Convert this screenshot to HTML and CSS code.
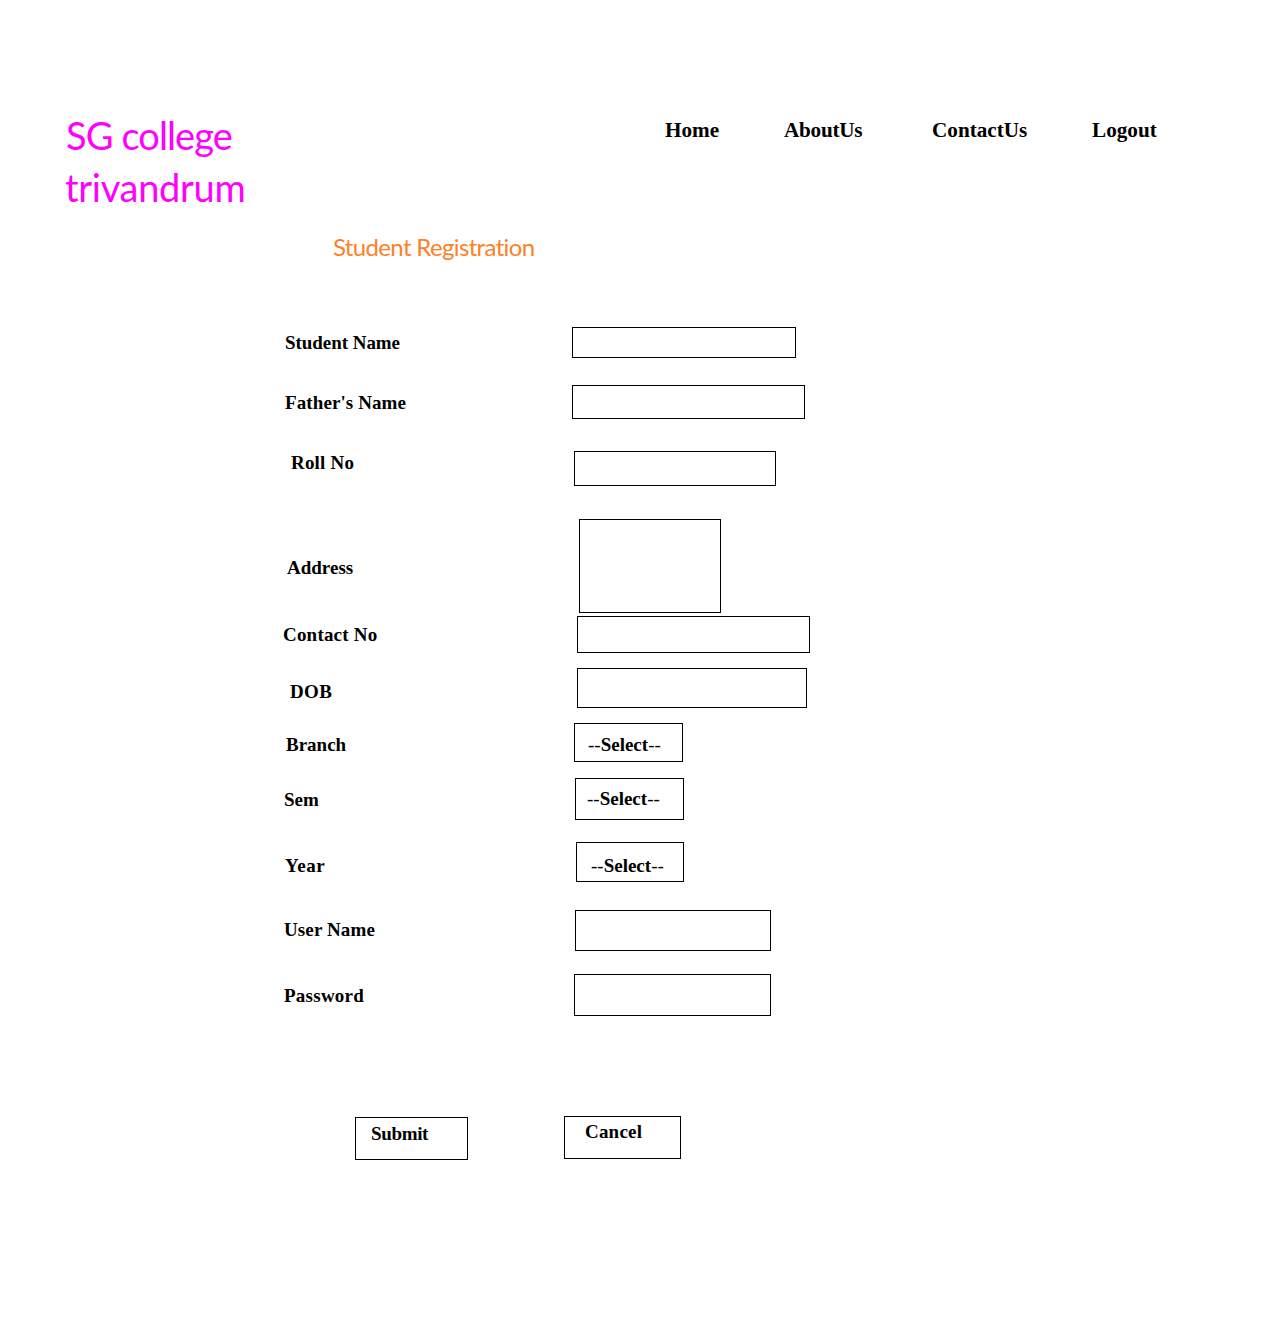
FILE: index.html
```html
<!DOCTYPE html>
<html lang="en">
<head>
<meta charset="utf-8">
<title>Student Registration</title>
<link rel="stylesheet" href="styles.css">
</head>
<body>
<header class="header">
  <div class="brand"><span class="brand-top">SG college</span><span class="brand-bottom">trivandrum</span></div>
  <nav class="nav"><a>Home</a><a class="about">AboutUs</a><a>ContactUs</a><a>Logout</a></nav>
</header>
<main class="main">
  <h1 class="title">Student Registration</h1>
  <form class="form">
    <div class="row student"><label>Student Name</label><input type="text"></div>
    <div class="row father"><label>Father's Name</label><input type="text"></div>
    <div class="row roll"><label>Roll No</label><input type="text"></div>
    <div class="row address"><label>Address</label><textarea></textarea></div>
    <div class="row contact"><label>Contact No</label><input type="text"></div>
    <div class="row dob"><label>DOB</label><input type="text"></div>
    <div class="row branch"><label>Branch</label><div class="select"><i>--</i>Select<i>--</i></div></div>
    <div class="row sem"><label>Sem</label><div class="select"><i>--</i>Select<i>--</i></div></div>
    <div class="row year"><label>Year</label><div class="select"><i>--</i>Select<i>--</i></div></div>
    <div class="row user"><label>User Name</label><input type="text"></div>
    <div class="row password"><label>Password</label><input type="password"></div>
    <div class="actions"><button type="button" class="submit">Submit</button><button type="button" class="cancel">Cancel</button></div>
  </form>
</main>
</body>
</html>
```
FILE: styles.css
```css
* { box-sizing: border-box; }
body {
  margin: 0;
  min-height: 1319px;
  background: #fff;
  color: #000;
  font: bold 19px/21px "Liberation Serif", "Times New Roman", serif;
}
.header { display: flex; height: 233px; padding: 109px 0 0 65px; }
.brand {
  display: flex;
  flex-direction: column;
  width: 600px;
  color: #f0f;
  font: 400 38px/52px Lato, sans-serif;
}
.brand-top { padding-left: 1px; letter-spacing: -0.9px; }
.brand-bottom { letter-spacing: -0.3px; }
.nav {
  display: grid;
  grid-template-columns: 119px 148px 160px auto;
  align-content: start;
  padding-top: 9px;
  font-size: 21.2px;
  line-height: 24px;
}
.nav .about { letter-spacing: -0.25px; }
.main { padding-left: 280px; }
.title {
  height: 94px;
  margin: 0;
  padding-left: 53px;
  color: #ff7f27;
  font: 400 24px/28px Lato, sans-serif;
  font-variant-ligatures: none;
  letter-spacing: -0.65px;
}
.form { display: flex; flex-direction: column; }
.row { display: flex; align-items: flex-start; }
.row label { width: 292px; }
.row input, .row textarea, .select, .actions button {
  border: 1px solid #000;
  border-radius: 0;
  background: #fff;
  color: #000;
  font: inherit;
  margin: 0;
  padding: 0;
  resize: none;
  outline: none;
}
.select i { font-style: normal; font-weight: 400; }

.student label { padding: 5px 0 0 5px; letter-spacing: -0.05px; }
.student input { width: 224px; height: 31px; }
.father { margin-top: 27px; }
.father label { padding: 7px 0 0 5px; letter-spacing: 0.1px; }
.father input { width: 233px; height: 34px; }
.roll { margin-top: 32px; }
.roll label { padding: 1px 0 0 11px; letter-spacing: 0.2px; }
.roll input { width: 202px; height: 35px; margin-left: 2px; }
.address { margin-top: 33px; }
.address label { padding: 38px 0 0 7px; }
.address textarea { width: 142px; height: 94px; margin-left: 7px; }
.contact { margin-top: 3px; }
.contact label { padding: 8px 0 0 3px; letter-spacing: 0.2px; }
.contact input { width: 233px; height: 37px; margin-left: 5px; }
.dob { margin-top: 15px; }
.dob label { padding: 13px 0 0 10px; letter-spacing: 0.4px; }
.dob input { width: 230px; height: 40px; margin-left: 5px; }
.branch { margin-top: 15px; }
.branch label { padding: 11px 0 0 6px; }
.branch .select { width: 109px; height: 39px; margin-left: 2px; padding: 10px 0 0 13px; }
.sem { margin-top: 16px; }
.sem label { padding: 11px 0 0 4px; }
.sem .select { width: 109px; height: 42px; margin-left: 3px; padding: 9px 0 0 11px; }
.year { margin-top: 22px; }
.year label { padding: 13px 0 0 5px; letter-spacing: 0.6px; }
.year .select { width: 108px; height: 40px; margin-left: 4px; padding: 12px 0 0 14px; }
.user { margin-top: 28px; }
.user label { padding: 9px 0 0 4px; letter-spacing: 0.12px; }
.user input { width: 196px; height: 41px; margin-left: 3px; }
.password { margin-top: 23px; }
.password label { padding: 11px 0 0 4px; letter-spacing: 0.25px; }
.password input { width: 197px; height: 42px; margin-left: 2px; }

.actions { display: flex; align-items: flex-start; gap: 96px; margin-top: 100px; padding-left: 75px; }
.actions button { display: flex; align-items: flex-start; height: 43px; }
.actions .submit { width: 113px; margin-top: 1px; padding: 5px 0 0 15px; letter-spacing: -0.35px; }
.actions .cancel { width: 117px; padding: 4px 0 0 20px; letter-spacing: 0.2px; }
```
